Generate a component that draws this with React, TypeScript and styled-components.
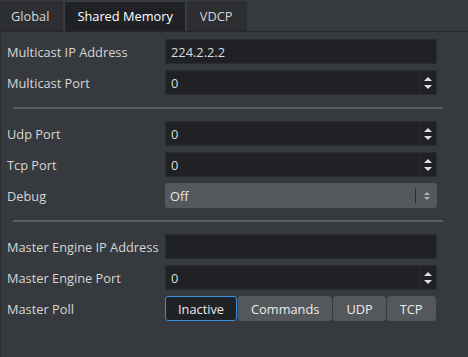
import styled, { createGlobalStyle } from "styled-components";

const Global = createGlobalStyle`
  html, body {
    margin: 0;
    padding: 0;
    background: #36393d;
    font-family: "Open Sans", "Noto Sans", sans-serif;
    font-size: 12.8px;
    color: #d6d6d6;
  }
`;

const Window = styled.div`
  width: 468px;
  height: 357px;
  display: flex;
  flex-direction: column;
  background: #36393d;
`;

const TabBar = styled.div`
  display: flex;
  gap: 1px;
  height: 30px;
  padding-top: 1px;
  border-bottom: 1px solid #26282b;
`;

const Tab = styled.div<{ $active?: boolean; $last?: boolean }>`
  display: flex;
  align-items: center;
  padding: 0 12px 1px;
  background: ${(p) => (p.$active ? "#1f2125" : "#2c2e32")};
  border: 1px solid ${(p) => (p.$active ? "#3b3e42" : "#2c2e32")};
  border-bottom: none;
  border-top-right-radius: ${(p) => (p.$last ? "4px" : "0")};
  color: ${(p) => (p.$active ? "#ffffff" : "#d6d6d6")};
  &:first-child {
    padding-left: 11px;
    padding-right: 13px;
    border-left: none;
  }
  &:last-child {
    padding: 0 13px 1px 12px;
  }
`;

const Panel = styled.div`
  flex: 1;
  border-left: 1px solid #2a2c30;
  border-right: 1px solid #2a2c30;
  width: 466px;
  padding: 7px 0 0 6px;
  display: flex;
  flex-direction: column;
  gap: 6px;
`;

const Row = styled.div`
  display: flex;
  align-items: center;
  height: 25px;
`;

const Label = styled.div`
  width: 158px;
  white-space: nowrap;
`;

const Field = styled.div`
  width: 272px;
  height: 100%;
  box-sizing: border-box;
  background: #1f2125;
  border: 1px solid #2a2c30;
  display: flex;
  align-items: center;
  color: #dcdcdc;
`;

const Value = styled.div`
  flex: 1;
  padding-left: 5px;
`;

const Spin = styled.div`
  width: 16px;
  height: 100%;
  border-left: 1px solid #2a2c30;
  display: flex;
  flex-direction: column;
  align-items: center;
  justify-content: center;
  gap: 4px;
`;

const Arrow = styled.div<{ $down?: boolean; $dim?: boolean }>`
  width: 0;
  height: 0;
  border-left: 4px solid transparent;
  border-right: 4px solid transparent;
  ${(p) =>
    p.$down
      ? `border-top: 4px solid ${p.$dim ? "#b0b3b6" : "#e0e0e0"};`
      : `border-bottom: 4px solid ${p.$dim ? "#b0b3b6" : "#e0e0e0"};`}
`;

const Combo = styled.div`
  width: 272px;
  height: 100%;
  box-sizing: border-box;
  background: #54585c;
  border-radius: 3px;
  display: flex;
  align-items: center;
  color: #e6e6e6;
`;

const ComboDivider = styled.div`
  width: 1px;
  height: 15px;
  background: #2a2c2f;
`;

const ComboArrows = styled.div`
  width: 21px;
  display: flex;
  flex-direction: column;
  align-items: center;
  gap: 2px;
`;

const SmallArrow = styled(Arrow)`
  border-left-width: 3px;
  border-right-width: 3px;
  ${(p) => (p.$down ? "border-top-width: 3px;" : "border-bottom-width: 3px;")}
`;

const Separator = styled.div`
  height: 2px;
  background: #5a5d61;
  margin: 6px 30px 6px 6px;
`;

const Buttons = styled.div`
  display: flex;
  gap: 1px;
  height: 100%;
`;

const Button = styled.div<{ $selected?: boolean }>`
  display: flex;
  align-items: center;
  justify-content: center;
  padding: 0 12px;
  box-sizing: border-box;
  border-radius: 3px;
  background: ${(p) => (p.$selected ? "#1f2125" : "#54585c")};
  border: 1px solid ${(p) => (p.$selected ? "#3a8fe0" : "#54585c")};
  color: #ececec;
`;

const SpinField = ({ value }: { value: string }) => (
  <Field>
    <Value>{value}</Value>
    <Spin>
      <Arrow />
      <Arrow $down />
    </Spin>
  </Field>
);

const App = () => {
  return (
    <Window>
      <Global />
      <TabBar>
        <Tab>Global</Tab>
        <Tab $active>Shared Memory</Tab>
        <Tab $last>VDCP</Tab>
      </TabBar>
      <Panel>
        <Row>
          <Label>Multicast IP Address</Label>
          <Field>
            <Value>224.2.2.2</Value>
          </Field>
        </Row>
        <Row>
          <Label>Multicast Port</Label>
          <SpinField value="0" />
        </Row>
        <Separator />
        <Row>
          <Label>Udp Port</Label>
          <SpinField value="0" />
        </Row>
        <Row>
          <Label>Tcp Port</Label>
          <SpinField value="0" />
        </Row>
        <Row>
          <Label>Debug</Label>
          <Combo>
            <Value>Off</Value>
            <ComboDivider />
            <ComboArrows>
              <SmallArrow $dim />
              <SmallArrow $down $dim />
            </ComboArrows>
          </Combo>
        </Row>
        <Separator />
        <Row>
          <Label>Master Engine IP Address</Label>
          <Field />
        </Row>
        <Row>
          <Label>Master Engine Port</Label>
          <SpinField value="0" />
        </Row>
        <Row>
          <Label>Master Poll</Label>
          <Buttons>
            <Button $selected>Inactive</Button>
            <Button>Commands</Button>
            <Button>UDP</Button>
            <Button>TCP</Button>
          </Buttons>
        </Row>
      </Panel>
    </Window>
  );
};

export default App;
